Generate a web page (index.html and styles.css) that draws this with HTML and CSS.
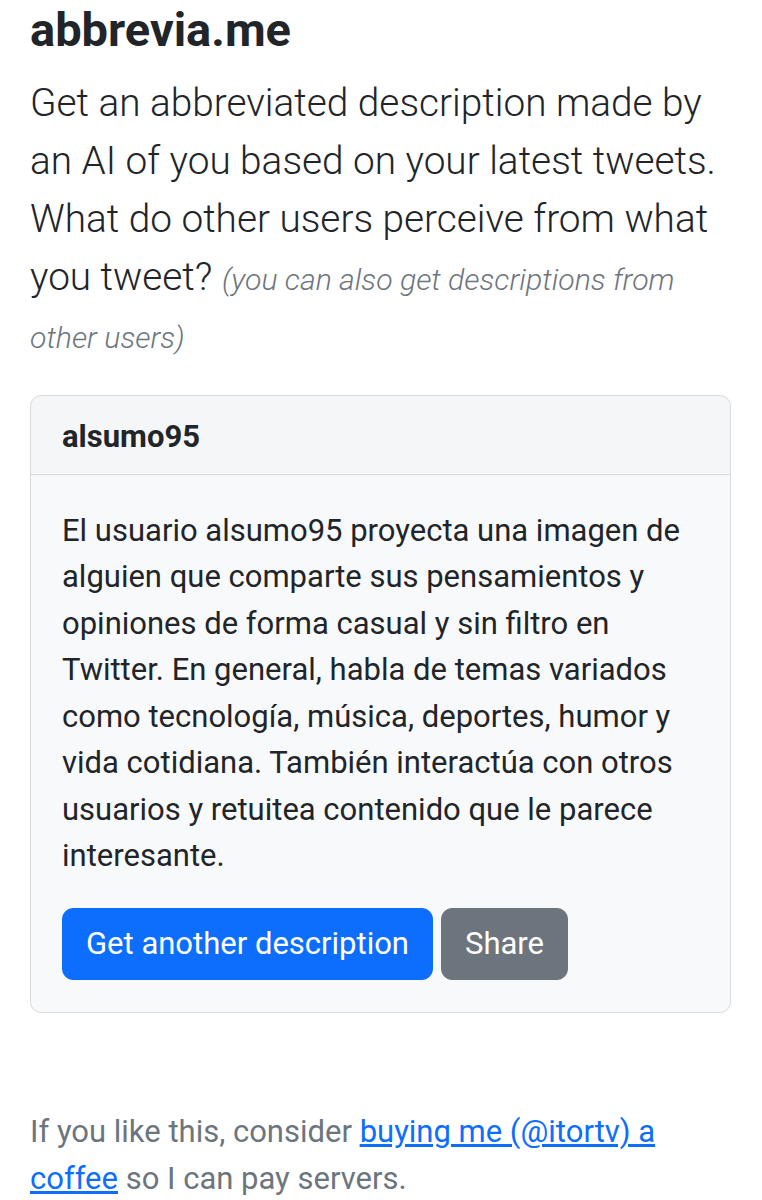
FILE: index.html
```html
<!DOCTYPE html>
<html lang="en">
<head>
<meta charset="utf-8">
<title>abbrevia.me</title>
<link rel="stylesheet" href="styles.css">
</head>
<body>
<main class="container">
  <h1 class="title">abbrevia.me</h1>
  <p class="lead">Get an abbreviated description made by an AI of you based on your latest tweets. What do other users perceive from what you tweet? <small class="hint">(you can also get descriptions from other users)</small></p>
  <section class="card">
    <header class="card-header">alsumo95</header>
    <div class="card-body">
      <p class="card-text">El usuario alsumo95 proyecta una imagen de alguien que comparte sus pensamientos y opiniones de forma casual y sin filtro en Twitter. En general, habla de temas variados como tecnología, música, deportes, humor y vida cotidiana. También interactúa con otros usuarios y retuitea contenido que le parece interesante.</p>
      <div class="actions">
        <button class="btn btn-primary">Get another description</button>
        <button class="btn btn-secondary">Share</button>
      </div>
    </div>
  </section>
  <p class="footer">If you like this, consider <a href="#">buying me (@itortv) a coffee</a> so I can pay servers.</p>
</main>
</body>
</html>
```
FILE: styles.css
```css
* { box-sizing: border-box; }
html, body { margin: 0; padding: 0; background: #fff; }
body {
  font-family: Roboto, "Liberation Sans", sans-serif;
  font-size: 31px;
  line-height: 1.5;
  color: #212529;
}
.container {
  padding: 1px 31px 0 30px;
}
.title {
  margin: 0 0 15.5px;
  font-size: 47px;
  font-weight: 700;
  line-height: 57.6px;
}
.lead {
  margin: 0 0 31px;
  font-size: 38.75px;
  font-weight: 300;
  line-height: 58px;
}
.hint {
  font-size: 0.78em;
  line-height: 1;
  font-style: italic;
  color: #6c757d;
}
.card {
  background: #f8f9fa;
  border: 1px solid #d9dadc;
  border-radius: 11px;
  overflow: hidden;
}
.card-header {
  padding: 18px 31px 13px;
  font-weight: 700;
  line-height: 46.5px;
  background: rgba(0,0,0,0.01);
  border-bottom: 1px solid #d9dadc;
}
.card-body {
  padding: 33px 31px 32px;
}
.card-text {
  margin: 0 0 28px;
  line-height: 46.5px;
}
.actions {
  display: flex;
  gap: 8px;
}
.btn {
  font-family: inherit;
  font-size: 31px;
  line-height: 46.5px;
  padding: 12px 23px;
  border: 1px solid transparent;
  border-radius: 11px;
  color: #fff;
  cursor: pointer;
}
.btn-primary { background: #0d6efd; border-color: #0d6efd; }
.btn-secondary { background: #6c757d; border-color: #6c757d; }
.footer {
  margin: 95px 0 0;
  color: #6c757d;
  line-height: 47px;
}
.footer a {
  color: #0d6efd;
  text-decoration: underline;
}
```
